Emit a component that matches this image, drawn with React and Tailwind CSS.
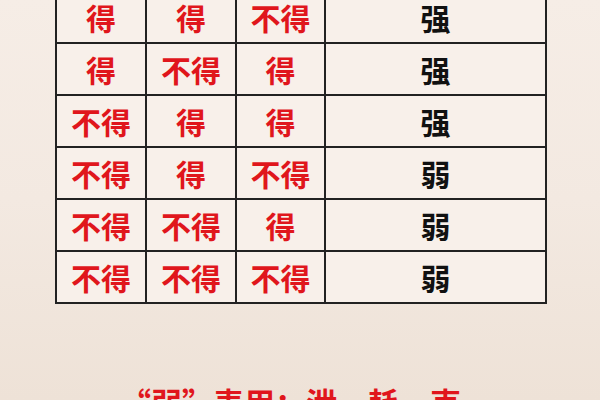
import React from 'react';

const rows = [
  ['得', '得', '不得', '强'],
  ['得', '不得', '得', '强'],
  ['不得', '得', '得', '强'],
  ['不得', '得', '不得', '弱'],
  ['不得', '不得', '得', '弱'],
  ['不得', '不得', '不得', '弱'],
];

const font = { fontFamily: '"Noto Sans CJK SC", "Noto Sans", sans-serif' };

export default function App() {
  return (
    <div
      className="w-[600px] h-[400px] overflow-hidden bg-gradient-to-b from-[#f6ede6] via-[#f3e9e1] to-[#eee2d7]"
      style={font}
    >
      <div className="ml-[55px] -mt-[10px] w-[492px] grid grid-cols-[88px_88px_87px_219px] gap-[2px] p-[2px] bg-[#222]">
        {rows.map((row, i) =>
          row.map((cell, j) => (
            <div
              key={`${i}-${j}`}
              className={`h-[50px] flex items-center justify-center bg-[#f8f0ea] text-[30px] font-bold leading-none ${
                j === 3 ? 'text-[#111]' : 'text-[#e0161c]'
              }`}
            >
              {cell}
            </div>
          ))
        )}
      </div>
      <div className="mt-[82px] pl-[120px] text-[31px] font-bold leading-none text-[#e0161c] whitespace-nowrap">
        “弱”表用：泄、耗、克
      </div>
    </div>
  );
}
